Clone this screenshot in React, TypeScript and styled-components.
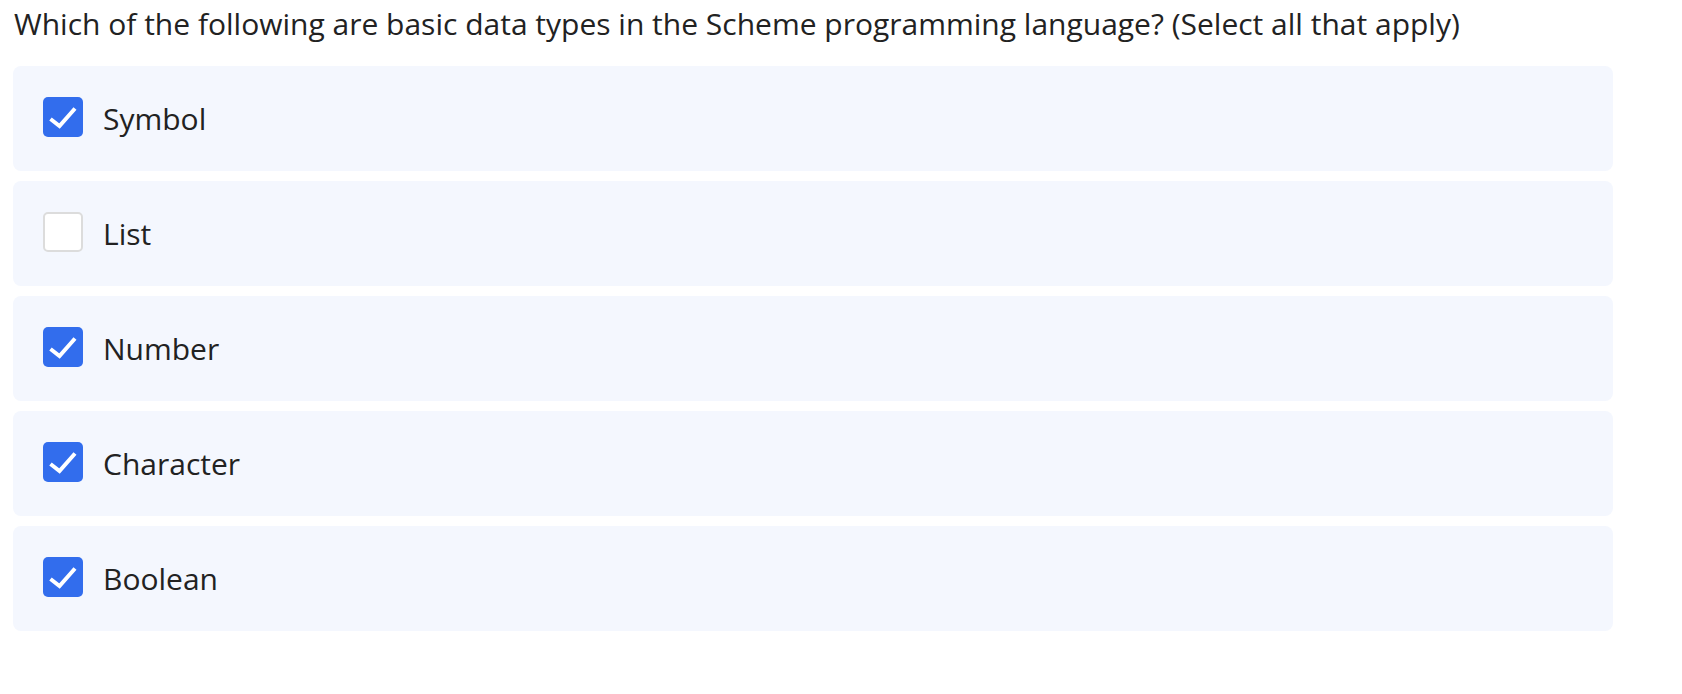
import React from "react";
import styled, { createGlobalStyle } from "styled-components";

const Global = createGlobalStyle`
  html, body { margin: 0; padding: 0; background: #ffffff; }
  body { font-family: "Open Sans", "Liberation Sans", sans-serif; color: #222222; }
`;

const Page = styled.div`
  padding: 3px 0 0 13px;
  width: 1600px;
`;

const Question = styled.h1`
  margin: 0 0 22px 1px;
  font-size: 30px;
  font-weight: 400;
  line-height: 41px;
  color: #222222;
`;

const Options = styled.div`
  display: flex;
  flex-direction: column;
  gap: 10px;
`;

const Option = styled.label`
  display: flex;
  align-items: center;
  gap: 20px;
  height: 105px;
  box-sizing: border-box;
  padding: 0 30px;
  background: #f4f7fe;
  border-radius: 8px;
  cursor: pointer;
`;

const Box = styled.span<{ $checked: boolean }>`
  flex: none;
  width: 40px;
  height: 40px;
  box-sizing: border-box;
  margin-bottom: 4px;
  border-radius: 5px;
  display: flex;
  align-items: center;
  justify-content: center;
  background: ${(p) => (p.$checked ? "#326ded" : "#ffffff")};
  border: ${(p) => (p.$checked ? "none" : "2px solid #dcdcdc")};
`;

const Label = styled.span`
  font-size: 30px;
  line-height: 41px;
  color: #222222;
`;

const options = [
  { label: "Symbol", checked: true },
  { label: "List", checked: false },
  { label: "Number", checked: true },
  { label: "Character", checked: true },
  { label: "Boolean", checked: true },
];

export default function App() {
  return (
    <>
      <Global />
      <Page>
        <Question>
          Which of the following are basic data types in the Scheme programming language? (Select all that apply)
        </Question>
        <Options>
          {options.map((o) => (
            <Option key={o.label}>
              <Box $checked={o.checked}>
                {o.checked && (
                  <svg width="40" height="40" viewBox="0 0 40 40">
                    <polyline
                      points="7.5,22 16.5,29 32,11.5"
                      fill="none"
                      stroke="#ffffff"
                      strokeWidth="4"
                      strokeLinecap="butt"
                      strokeLinejoin="miter"
                    />
                  </svg>
                )}
              </Box>
              <Label>{o.label}</Label>
            </Option>
          ))}
        </Options>
      </Page>
    </>
  );
}
